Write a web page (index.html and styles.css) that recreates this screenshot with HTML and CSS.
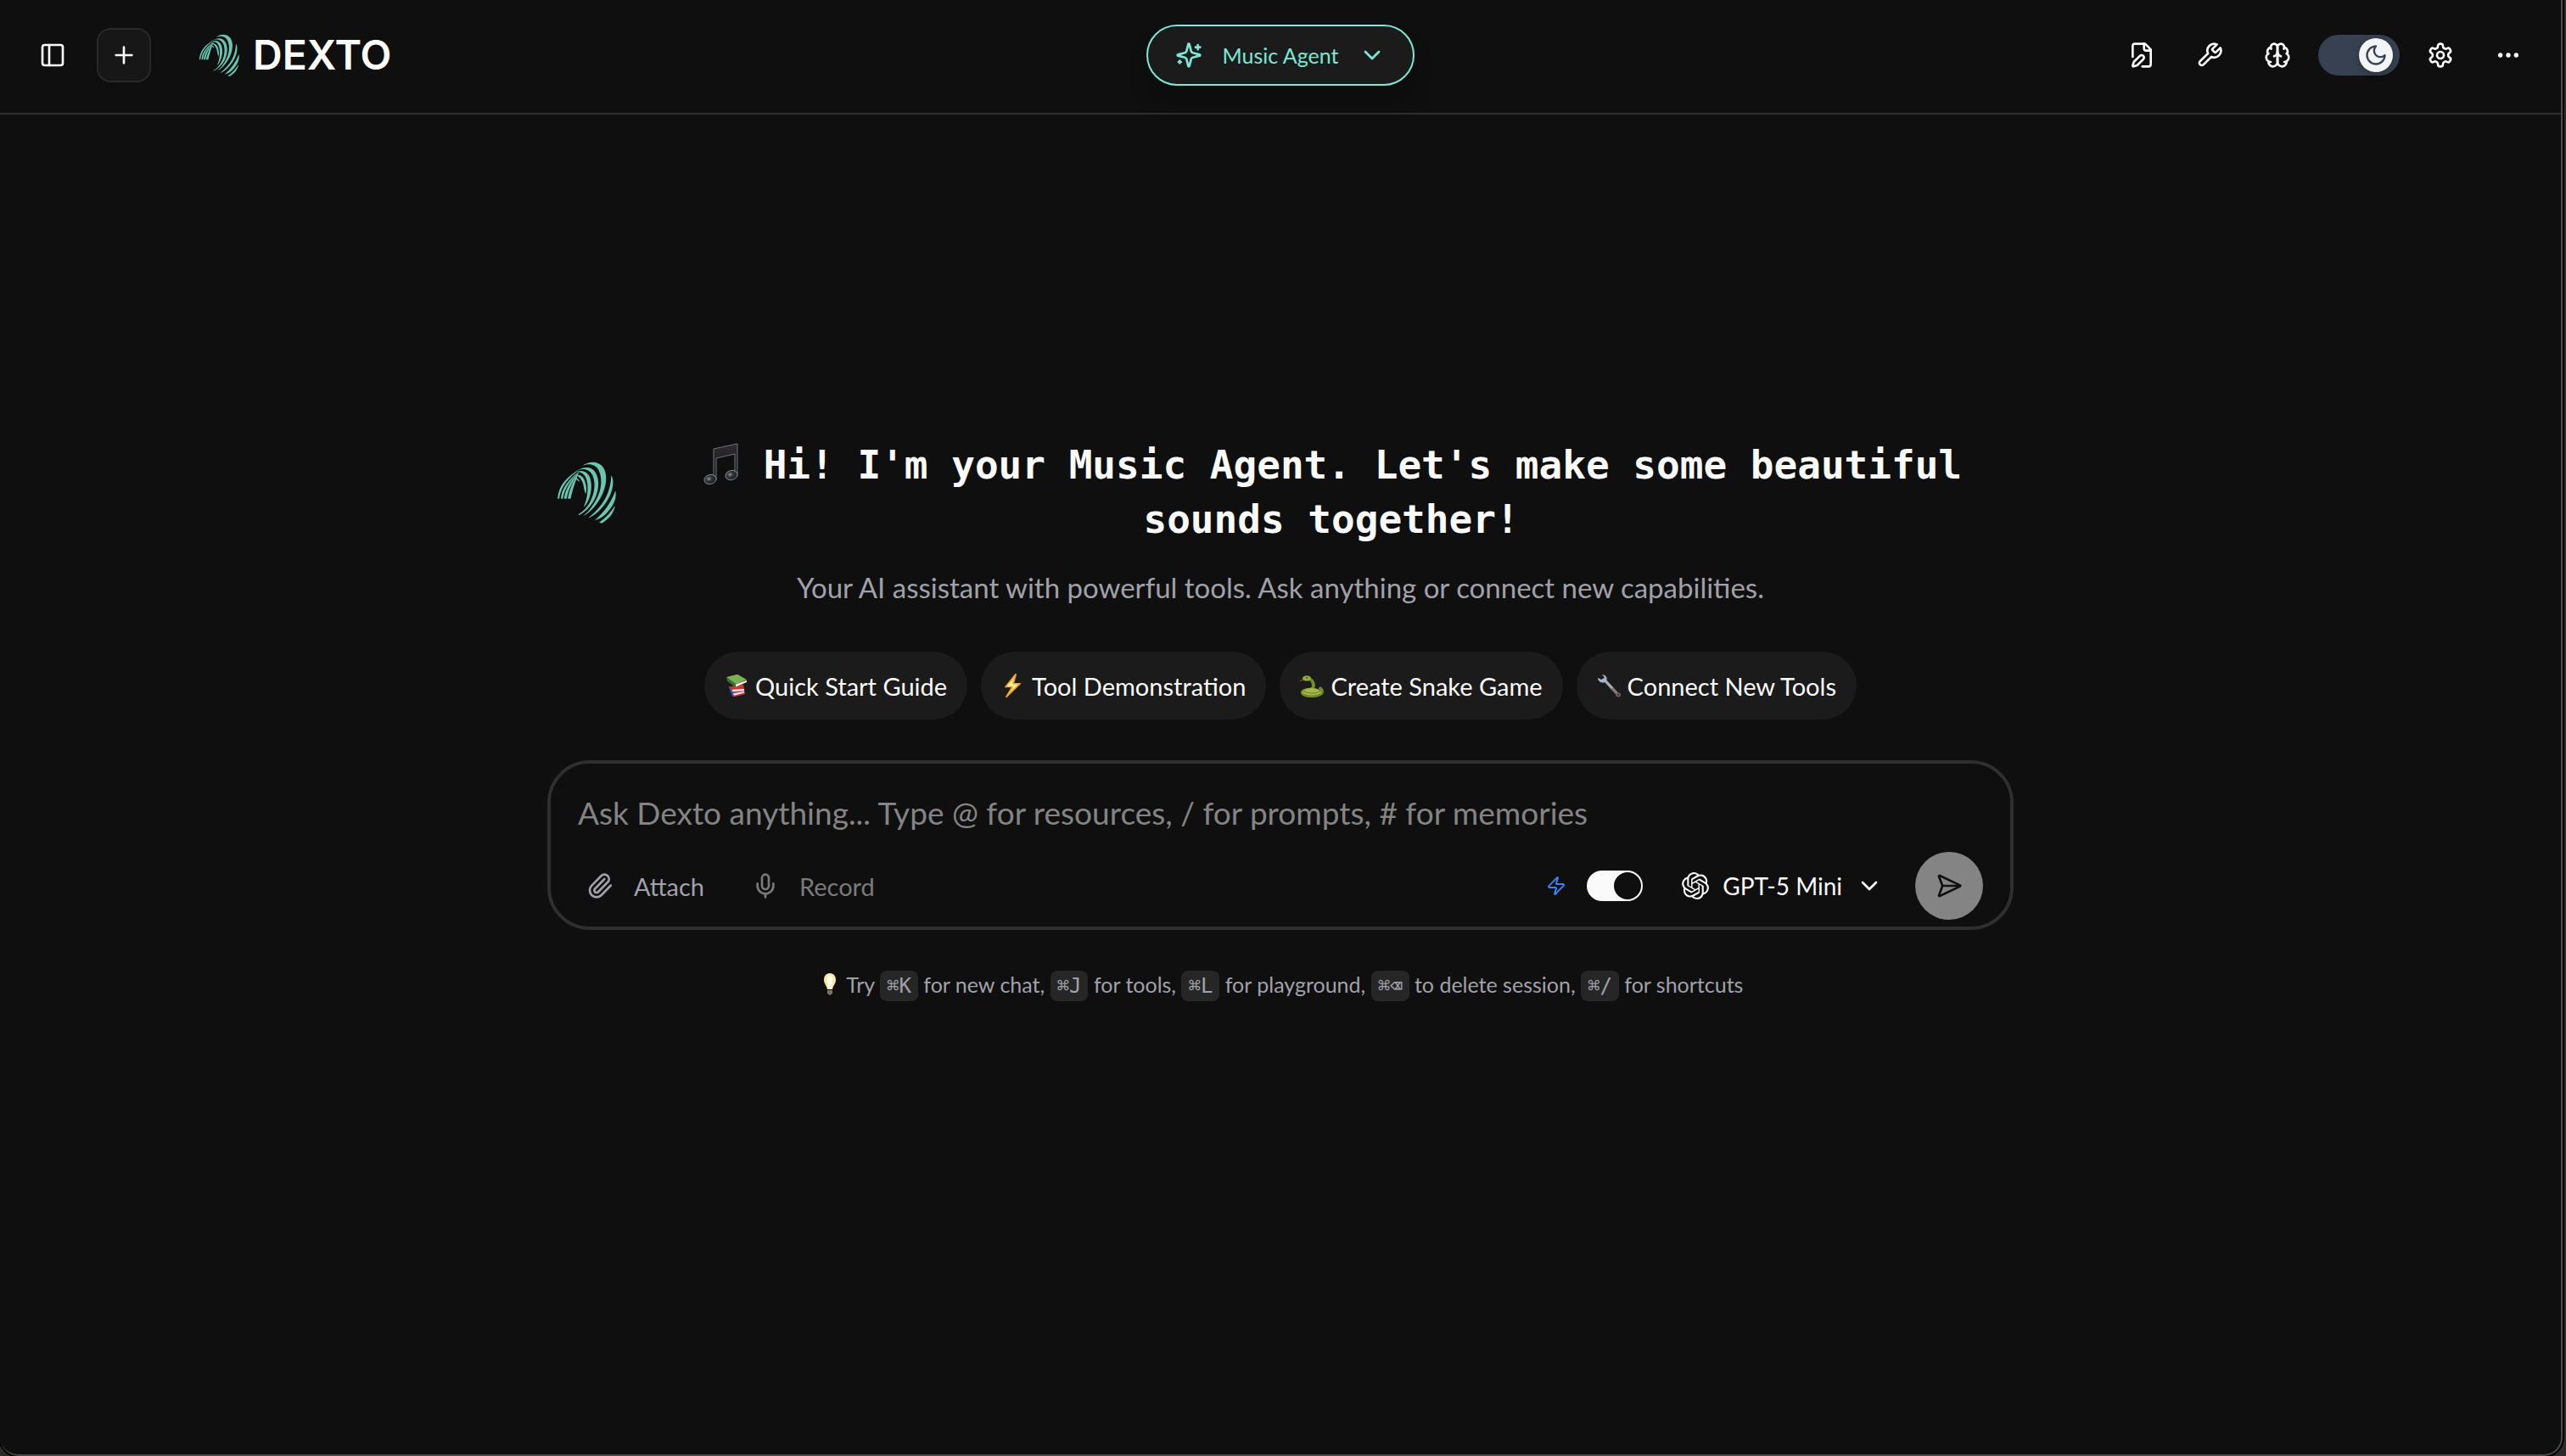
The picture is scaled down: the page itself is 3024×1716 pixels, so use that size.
FILE: index.html
```html
<!DOCTYPE html>
<html lang="en">
<head>
<meta charset="utf-8">
<meta name="viewport" content="width=device-width, initial-scale=1">
<title>Dexto</title>
<link rel="stylesheet" href="styles.css">
</head>
<body>
<svg class="sprite" aria-hidden="true">
  <symbol id="dexto-mark" viewBox="36 42 226 226">
    <path d="M135 63C155 46 190 44 208 68C232 105 212 170 172 212C160 224 148 234 138 238C150 228 158 220 168 206C200 165 210 115 192 78C180 56 155 54 135 63Z"/>
    <path d="M120 78C142 64 172 64 184 92C202 130 184 185 155 212C145 222 132 232 122 236L122 232C140 222 152 208 162 190C180 155 182 120 170 95C160 75 140 70 120 78Z"/>
    <path d="M116 84C134 76 154 84 162 105C172 135 165 180 142 206L141 203C152 180 158 140 150 112C144 92 130 84 116 84Z"/>
    <path d="M112 94C128 92 140 102 145 120C150 135 150 150 147 162C145 158 142 150 140 138C137 115 128 104 112 94Z"/>
    <path d="M108 104C116 104 122 110 126 120C120 116 114 112 108 104Z"/>
    <path d="M236 96C248 110 244 150 222 185C205 212 180 238 155 246C180 226 200 205 215 178C230 150 236 120 236 96Z"/>
    <path d="M251 150C256 175 246 198 228 220C212 240 196 250 178 254C205 232 235 195 251 150Z"/>
    <path d="M250 202C246 228 228 250 203 264L194 261C218 245 236 225 250 202Z"/>
    <path d="M48 178C52 130 80 102 126 74C88 106 60 132 54 178Z"/>
    <path d="M60 178C62 140 88 112 124 80C96 114 72 138 67 178Z"/>
    <path d="M71 178C75 145 92 118 124 82C104 116 86 140 80 178Z"/>
    <path d="M84 178C88 150 102 118 124 80C116 105 102 140 94 178Z"/>
  </symbol>
  <symbol id="chevron-down" viewBox="0 0 24 24"><path d="m6 9 6 6 6-6"/></symbol>
</svg>

<div class="app">
  <header class="topbar">
    <div class="topbar-side">
      <button class="icon-button" type="button" aria-label="Toggle sessions panel">
        <svg class="icon" viewBox="0 0 24 24"><rect width="18" height="18" x="3" y="3" rx="2"/><path d="M9 3v18"/></svg>
      </button>
      <button class="icon-button icon-button-framed" type="button" aria-label="New chat">
        <svg class="icon" viewBox="0 0 24 24"><path d="M5 12h14M12 5v14"/></svg>
      </button>
      <a class="brand" href="#">
        <svg class="brand-mark"><use href="#dexto-mark"/></svg>
        <span class="brand-name">DEXTO</span>
      </a>
    </div>

    <button class="agent-picker" type="button">
      <svg class="icon" viewBox="0 0 24 24"><path d="M9.937 15.5A2 2 0 0 0 8.5 14.063l-6.135-1.582a.5.5 0 0 1 0-.962L8.5 9.936A2 2 0 0 0 9.937 8.5l1.582-6.135a.5.5 0 0 1 .963 0L14.063 8.5A2 2 0 0 0 15.5 9.937l6.135 1.581a.5.5 0 0 1 0 .964L15.5 14.063a2 2 0 0 0-1.437 1.437l-1.582 6.135a.5.5 0 0 1-.963 0zM20 3v4M22 5h-4M4 17v2M5 18H3"/></svg>
      <span>Music Agent</span>
      <svg class="icon"><use href="#chevron-down"/></svg>
    </button>

    <div class="topbar-side topbar-actions">
      <button class="icon-button" type="button" aria-label="Customize agent">
        <svg class="icon" viewBox="0 0 24 24"><path d="M12.5 22H18a2 2 0 0 0 2-2V7l-5-5H6a2 2 0 0 0-2 2v9.5"/><path d="M14 2v4a2 2 0 0 0 2 2h4"/><path d="M13.378 15.626a1 1 0 1 0-3.004-3.004l-5.01 5.012a2 2 0 0 0-.506.854l-.837 2.87a.5.5 0 0 0 .62.62l2.87-.837a2 2 0 0 0 .854-.506z"/></svg>
      </button>
      <button class="icon-button" type="button" aria-label="Tools">
        <svg class="icon" viewBox="0 0 24 24"><path d="M14.7 6.3a1 1 0 0 0 0 1.4l1.6 1.6a1 1 0 0 0 1.4 0l3.77-3.77a6 6 0 0 1-7.94 7.94l-6.91 6.91a2.12 2.12 0 0 1-3-3l6.91-6.91a6 6 0 0 1 7.94-7.94l-3.76 3.76z"/></svg>
      </button>
      <button class="icon-button" type="button" aria-label="Memories">
        <svg class="icon" viewBox="0 0 24 24"><path d="M12 5a3 3 0 1 0-5.997.125 4 4 0 0 0-2.526 5.77 4 4 0 0 0 .556 6.588A4 4 0 1 0 12 18Z"/><path d="M12 5a3 3 0 1 1 5.997.125 4 4 0 0 1 2.526 5.77 4 4 0 0 1-.556 6.588A4 4 0 1 1 12 18Z"/><path d="M15 13a4.5 4.5 0 0 1-3-4 4.5 4.5 0 0 1-3 4M17.599 6.5a3 3 0 0 0 .399-1.375M6.003 5.125A3 3 0 0 0 6.401 6.5M3.477 10.896a4 4 0 0 1 .585-.396M19.938 10.5a4 4 0 0 1 .585.396M6 18a4 4 0 0 1-1.967-.516M19.967 17.484A4 4 0 0 1 18 18"/></svg>
      </button>
      <label class="theme-switch">
        <input class="theme-input" type="checkbox" role="switch" checked aria-label="Dark theme">
        <span class="theme-knob"><svg class="icon icon-moon" viewBox="0 0 24 24"><path d="M12 3a6 6 0 0 0 9 9 9 9 0 1 1-9-9Z"/></svg></span>
      </label>
      <button class="icon-button" type="button" aria-label="Settings">
        <svg class="icon" viewBox="0 0 24 24"><path d="M12.22 2h-.44a2 2 0 0 0-2 2v.18a2 2 0 0 1-1 1.73l-.43.25a2 2 0 0 1-2 0l-.15-.08a2 2 0 0 0-2.73.73l-.22.38a2 2 0 0 0 .73 2.73l.15.1a2 2 0 0 1 1 1.72v.51a2 2 0 0 1-1 1.74l-.15.09a2 2 0 0 0-.73 2.73l.22.38a2 2 0 0 0 2.73.73l.15-.08a2 2 0 0 1 2 0l.43.25a2 2 0 0 1 1 1.73V20a2 2 0 0 0 2 2h.44a2 2 0 0 0 2-2v-.18a2 2 0 0 1 1-1.73l.43-.25a2 2 0 0 1 2 0l.15.08a2 2 0 0 0 2.73-.73l.22-.39a2 2 0 0 0-.73-2.73l-.15-.08a2 2 0 0 1-1-1.74v-.5a2 2 0 0 1 1-1.74l.15-.09a2 2 0 0 0 .73-2.73l-.22-.38a2 2 0 0 0-2.73-.73l-.15.08a2 2 0 0 1-2 0l-.43-.25a2 2 0 0 1-1-1.73V4a2 2 0 0 0-2-2z"/><circle cx="12" cy="12" r="3"/></svg>
      </button>
      <button class="icon-button" type="button" aria-label="More">
        <svg class="icon" viewBox="0 0 24 24"><circle cx="12" cy="12" r="1"/><circle cx="19" cy="12" r="1"/><circle cx="5" cy="12" r="1"/></svg>
      </button>
    </div>
  </header>

  <main class="welcome">
    <div class="hero">
      <svg class="hero-mark"><use href="#dexto-mark"/></svg>
      <h1 class="hero-title"><svg class="hero-note" viewBox="0 0 46 50" role="img" aria-label="Music note">
        <defs><linearGradient id="beam" x1="0" y1="0" x2="0" y2="1"><stop offset="0" stop-color="#2f2a2b"/><stop offset="1" stop-color="#191616"/></linearGradient>
        <radialGradient id="head" cx=".4" cy=".4" r=".7"><stop offset="0" stop-color="#8d969c"/><stop offset=".35" stop-color="#33383c"/><stop offset="1" stop-color="#121315"/></radialGradient></defs>
        <path d="M15 7 43 1V39H40V13L18 18V44H15Z" fill="url(#beam)" stroke="#6c757b"/>
        <ellipse cx="11" cy="43" rx="7" ry="5.500" fill="url(#head)" stroke="#7b858b" transform="rotate(-15 11 43)"/>
        <ellipse cx="36" cy="38" rx="7" ry="5.500" fill="url(#head)" stroke="#7b858b" transform="rotate(-15 36 38)"/>
      </svg> Hi! I'm your Music Agent. Let's make some beautiful sounds together!</h1>
    </div>
    <p class="hero-subtitle">Your AI assistant with powerful tools. Ask anything or connect new capabilities.</p>

    <div class="suggestions">
      <button class="chip" type="button">
        <svg class="chip-icon" viewBox="0 0 28 36" preserveAspectRatio="none"><path d="M5 20 22 16 24 31 11 35Z" fill="#c9382f"/><path d="M4 18 9 34 11 35 10 27Z" fill="#3554b8"/><path d="M9 24 23 23V26L9 27Z" fill="#e7ecf4"/><path d="M10 30 23 27V29L11 33Z" fill="#dfe5f2"/><path d="M2 5 15 1 26 9 13 16Z" fill="#79b353"/><path d="M2 5 13 15V21L3 11Z" fill="#3f6f2c"/><path d="M13 16 26 10V13L13 20Z" fill="#f3f3ee"/></svg>
        <span>Quick Start Guide</span>
      </button>
      <button class="chip" type="button">
        <svg class="chip-icon" viewBox="0 0 28 36" preserveAspectRatio="none"><path d="M17 1 5 20H13L6 35 22 15H14Z" fill="#fff1a0" stroke="#f0a42c" stroke-width="2" stroke-linejoin="round"/></svg>
        <span>Tool Demonstration</span>
      </button>
      <button class="chip" type="button">
        <svg class="chip-icon" viewBox="0 0 28 36" preserveAspectRatio="none"><path d="M24 22C30 31 20 34 14 34C5 34 1 30 4 26C7 22 16 26 16 18C16 11 13 8 9 7" fill="none" stroke="#718c2c" stroke-width="4" stroke-linecap="round"/><ellipse cx="14" cy="28" rx="11" ry="6" fill="#a3b944"/><path d="M4 26C10 31 20 31 25 25M5 31C11 35 18 34 24 31" fill="none" stroke="#60751f" stroke-width="1"/><ellipse cx="8" cy="7" rx="5" ry="4" fill="#8fac3d"/><circle cx="8" cy="6" r="1" fill="#26300e"/><path d="M4 9 0 11" stroke="#b85b4c" stroke-width="1"/></svg>
        <span>Create Snake Game</span>
      </button>
      <button class="chip" type="button">
        <svg class="chip-icon" viewBox="0 0 28 36" preserveAspectRatio="none"><path d="M10 11 25 32" stroke="#81777c" stroke-width="4" stroke-linecap="round"/><path d="M6 1C12 3 13 8 10 13C6 15 1 12 1 6L5 9 9 6Z" fill="#a9b8c8"/><path d="M10 11 18 22" stroke="#a4adb9" stroke-width="3"/><circle cx="25" cy="32" r="3" fill="#6f6265"/><circle cx="25" cy="32" r="1" fill="#1c1c1c"/></svg>
        <span>Connect New Tools</span>
      </button>
    </div>

    <form class="composer">
      <textarea class="composer-input" rows="1" aria-label="Message" placeholder="Ask Dexto anything... Type @ for resources, / for prompts, # for memories"></textarea>
      <div class="composer-bar">
        <div class="composer-group composer-tools">
          <button class="tool-button" type="button">
            <svg class="icon" viewBox="0 0 24 24"><path d="m16 6-8.414 8.586a2 2 0 0 0 2.829 2.829l8.414-8.586a4 4 0 1 0-5.657-5.657l-8.379 8.551a6 6 0 1 0 8.485 8.485l8.379-8.551"/></svg>
            <span>Attach</span>
          </button>
          <button class="tool-button tool-button-muted" type="button">
            <svg class="icon" viewBox="0 0 24 24"><path d="M12 2a3 3 0 0 0-3 3v7a3 3 0 0 0 6 0V5a3 3 0 0 0-3-3Z"/><path d="M19 10v2a7 7 0 0 1-14 0v-2M12 19v3"/></svg>
            <span>Record</span>
          </button>
        </div>
        <div class="composer-group">
          <label class="streaming">
            <svg class="icon icon-zap" viewBox="0 0 24 24"><path d="M4 14a1 1 0 0 1-.78-1.63l9.900-10.200a.5.5 0 0 1 .86.46l-1.920 6.020A1 1 0 0 0 13 10h7a1 1 0 0 1 .78 1.630l-9.900 10.200a.5.5 0 0 1-.86-.46l1.920-6.020A1 1 0 0 0 11 14z"/></svg>
            <input class="switch" type="checkbox" role="switch" checked aria-label="Streaming">
          </label>
          <button class="model-picker" type="button">
            <svg class="openai" viewBox="0 0 24 24"><path d="M22.2819 9.8211a5.9847 5.9847 0 0 0-.5157-4.9108 6.0462 6.0462 0 0 0-6.5098-2.9A6.0651 6.0651 0 0 0 4.9807 4.1818a5.9847 5.9847 0 0 0-3.9977 2.9 6.0462 6.0462 0 0 0 .7427 7.0966 5.98 5.98 0 0 0 .511 4.9107 6.051 6.051 0 0 0 6.5146 2.9001A5.9847 5.9847 0 0 0 13.2599 24a6.0557 6.0557 0 0 0 5.7718-4.2058 5.9894 5.9894 0 0 0 3.9977-2.9001 6.0557 6.0557 0 0 0-.7475-7.0729zm-9.022 12.6081a4.4755 4.4755 0 0 1-2.8764-1.0408l.1419-.0804 4.7783-2.7582a.7948.7948 0 0 0 .3927-.6813v-6.7369l2.02 1.1686a.071.071 0 0 1 .038.052v5.5826a4.504 4.504 0 0 1-4.4945 4.4944zm-9.6607-4.1254a4.4708 4.4708 0 0 1-.5346-3.0137l.142.0852 4.783 2.7582a.7712.7712 0 0 0 .7806 0l5.8428-3.3685v2.3324a.0804.0804 0 0 1-.0332.0615L9.74 19.9502a4.4992 4.4992 0 0 1-6.1408-1.6464zM2.3408 7.8956a4.485 4.485 0 0 1 2.3655-1.9728V11.6a.7664.7664 0 0 0 .3879.6765l5.8144 3.3543-2.0201 1.1685a.0757.0757 0 0 1-.071 0l-4.8303-2.7865A4.504 4.504 0 0 1 2.3408 7.872zm16.5963 3.8558L13.1038 8.364 15.1192 7.2a.0757.0757 0 0 1 .071 0l4.8303 2.7913a4.4944 4.4944 0 0 1-.6765 8.1042v-5.6772a.79.79 0 0 0-.407-.667zm2.0107-3.0231l-.142-.0852-4.7735-2.7818a.7759.7759 0 0 0-.7854 0L9.409 9.2297V6.8974a.0662.0662 0 0 1 .0284-.0615l4.8303-2.7866a4.4992 4.4992 0 0 1 6.6802 4.66zM8.3065 12.863l-2.02-1.1638a.0804.0804 0 0 1-.038-.0567V6.0742a4.4992 4.4992 0 0 1 7.3757-3.4537l-.142.0805L8.704 5.459a.7948.7948 0 0 0-.3927.6813zm1.0976-2.3654l2.602-1.4998 2.6069 1.4998v2.9994l-2.5974 1.4997-2.6067-1.4997Z"/></svg>
            <span>GPT-5 Mini</span>
            <svg class="icon"><use href="#chevron-down"/></svg>
          </button>
          <button class="send-button" type="submit" aria-label="Send">
            <svg class="icon" viewBox="0 0 24 24"><path d="M3.714 3.048a.498.498 0 0 0-.683.627l2.843 7.627a2 2 0 0 1 0 1.396l-2.842 7.627a.498.498 0 0 0 .682.627l18-8.5a.5.5 0 0 0 0-.904zM6 12h16"/></svg>
          </button>
        </div>
      </div>
    </form>

    <p class="hints"><svg class="hint-bulb" viewBox="0 0 28 28" role="img" aria-label="Tip"><path d="M14 1C9 1 7 5 7 9C7 13 10 15 11 20H17C18 15 21 13 21 9C21 5 19 1 14 1Z" fill="#fbe9a2"/><path d="M14 3C11 3 10 7 11 10L12 18H16L17 10C18 7 17 3 14 3Z" fill="#fffef2"/><path d="M11 21H17V25L14 27 11 25Z" fill="#77736b"/></svg> Try <kbd>⌘K</kbd> for new chat, <kbd>⌘J</kbd> for tools, <kbd>⌘L</kbd> for playground, <kbd>⌘⌫</kbd> to delete session, <kbd>⌘/</kbd> for shortcuts</p>
  </main>
</div>
</body>
</html>
```

FILE: styles.css
```css
:root {
  --background: #0f0f0f;
  --surface: #1b1b1b;
  --border: #2f2f2f;
  --foreground: #fafafa;
  --muted: #a1a1aa;
  --dim: #848484;
  --accent: #7ce8d5;
  --brand: #6cc5b1;
}

* {
  box-sizing: border-box;
}

body {
  margin: 0;
  padding-right: 4px;
  background: #2e2b2a;
  color: var(--foreground);
  font-family: Lato, "Open Sans", sans-serif;
  font-size: 28px;
}

button,
textarea {
  margin: 0;
  padding: 0;
  border: 0;
  background: none;
  color: inherit;
  font: inherit;
}

.sprite {
  display: none;
}

.icon {
  flex: none;
  width: 32px;
  height: 32px;
  fill: none;
  stroke: currentColor;
  stroke-width: 2;
  stroke-linecap: round;
  stroke-linejoin: round;
}

.app {
  display: flex;
  flex-direction: column;
  min-height: 100vh;
  border: solid #4a4a4a;
  border-width: 0 2px 2px 0;
  border-radius: 0 0 22px 22px;
  background: var(--background);
  box-shadow: 0 0 0 2px #000;
}

/* Top bar */

.topbar {
  display: grid;
  grid-template-columns: 1fr auto 1fr;
  align-items: center;
  padding: 29px 30px 32px;
  border-bottom: 2px solid var(--border);
}

.topbar-side {
  display: flex;
  align-items: center;
  gap: 20px;
}

.topbar-actions {
  justify-content: flex-end;
  gap: 16px;
}

.icon-button {
  display: grid;
  place-items: center;
  width: 64px;
  height: 64px;
  border-radius: 16px;
}

.icon-button-framed {
  border: 2px solid #292929;
  background: #171717;
}

.brand {
  display: flex;
  align-items: center;
  gap: 14px;
  margin-left: 34px;
  color: #fff;
  text-decoration: none;
}

.brand-mark {
  width: 52px;
  height: 52px;
  fill: var(--brand);
}

.brand-name {
  font: 600 48px/64px Inter, sans-serif;
}

.agent-picker {
  display: flex;
  align-items: center;
  gap: 24px;
  height: 72px;
  padding: 0 32px;
  border: 2px solid var(--accent);
  border-radius: 36px;
  background: var(--surface);
  box-shadow: 0 20px 24px -8px #0d0d0d;
  color: var(--accent);
  font-size: 25px;
}

.theme-switch {
  display: flex;
  align-items: center;
  justify-content: flex-end;
  width: 96px;
  height: 48px;
  padding: 0 8px;
  border-radius: 24px;
  background: #374151;
}

.theme-input {
  appearance: none;
  width: 0;
  height: 0;
  margin: 0;
}

.theme-knob {
  display: grid;
  place-items: center;
  width: 40px;
  height: 40px;
  border-radius: 50%;
  background: #f3f4f6;
  box-shadow: 0 2px 8px #0004;
  color: #374151;
}

.icon-moon {
  width: 28px;
  height: 28px;
}

/* Welcome screen */

.welcome {
  flex: 1;
  width: 100%;
  max-width: 1792px;
  margin: 0 auto;
  padding: 381px 32px 64px;
}

.hero {
  display: flex;
  align-items: center;
  gap: 36px;
  padding-left: 8px;
}

.hero-mark {
  flex: none;
  width: 76px;
  height: 76px;
  fill: var(--brand);
}

.hero-title {
  flex: 1;
  margin: 0;
  font: 700 46px/64px "DejaVu Sans Mono", monospace;
  text-align: center;
}

.hero-note {
  width: 46px;
  height: 50px;
  vertical-align: -8px;
}

.hero-subtitle {
  margin: 20px 0 0;
  color: var(--muted);
  font-size: 33px;
  line-height: 56px;
  text-align: center;
}

.suggestions {
  display: flex;
  flex-wrap: wrap;
  justify-content: center;
  gap: 16px;
  margin-top: 48px;
}

.chip {
  display: flex;
  align-items: center;
  gap: 8px;
  height: 80px;
  padding: 0 24px;
  border-radius: 40px;
  background: var(--surface);
  font-size: 29px;
}

.chip-icon {
  width: 28px;
  height: 28px;
}

/* Composer */

.composer {
  margin-top: 48px;
  padding: 34px 32px 8px;
  border: 4px solid var(--border);
  border-radius: 50px;
}

.composer-input {
  display: block;
  width: 100%;
  height: 48px;
  outline: 0;
  resize: none;
  font-size: 37px;
  line-height: 48px;
}

.composer-input::placeholder {
  color: var(--dim);
}

.composer-bar {
  display: flex;
  align-items: center;
  justify-content: space-between;
  margin-top: 22px;
}

.composer-group {
  display: flex;
  align-items: center;
  gap: 16px;
}

.composer-tools {
  gap: 56px;
  padding-left: 10px;
}

.tool-button {
  display: flex;
  align-items: center;
  gap: 24px;
  color: var(--muted);
  font-size: 29px;
}

.tool-button-muted {
  color: #7a7a7a;
}

.streaming {
  display: flex;
  align-items: center;
  gap: 24px;
  margin-right: 8px;
}

.icon-zap {
  width: 24px;
  height: 24px;
  color: #3b82f6;
}

.switch {
  appearance: none;
  display: flex;
  justify-content: flex-end;
  width: 66px;
  height: 36px;
  margin: 0;
  padding: 2px;
  border-radius: 18px;
  background: var(--foreground);
}

.switch::before {
  content: "";
  width: 32px;
  height: 32px;
  border-radius: 50%;
  background: var(--background);
}

.model-picker {
  display: flex;
  align-items: center;
  gap: 16px;
  padding: 0 22px;
}

.openai {
  width: 32px;
  height: 32px;
  fill: currentColor;
}

.send-button {
  display: grid;
  place-items: center;
  width: 80px;
  height: 80px;
  border-radius: 50%;
  background: var(--dim);
  color: var(--background);
}

/* Shortcut hints */

.hints {
  margin: 44px 0 0;
  color: var(--muted);
  font-size: 25px;
  line-height: 40px;
  text-align: center;
}

.hint-bulb {
  width: 28px;
  height: 28px;
  vertical-align: -4px;
}

kbd {
  padding: 4px 8px;
  border-radius: 8px;
  background: #262626;
  font: 24px "DejaVu Sans Mono", monospace;
}
```
